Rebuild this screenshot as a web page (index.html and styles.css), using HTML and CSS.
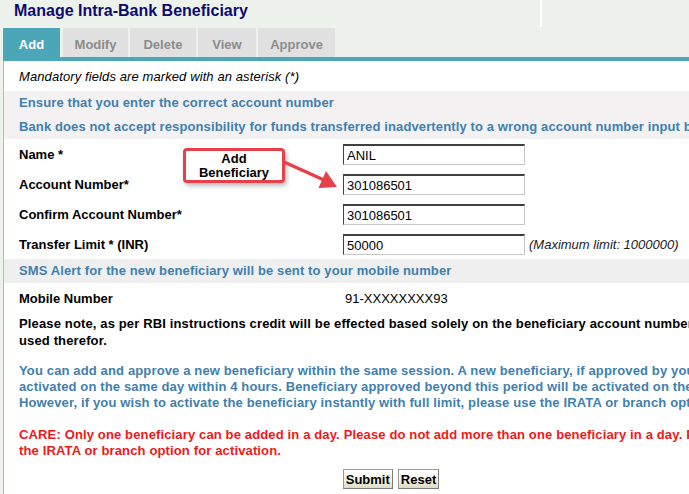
FILE: index.html
```html
<!DOCTYPE html>
<html>
<head>
<meta charset="utf-8">
<title>Manage Intra-Bank Beneficiary</title>
<link rel="stylesheet" href="styles.css">
</head>
<body>
<div class="page">
  <h1 class="title">Manage Intra-Bank Beneficiary</h1>
  <div class="tabs">
    <div class="tab tab-add active">Add</div>
    <div class="tab tab-modify">Modify</div>
    <div class="tab tab-delete">Delete</div>
    <div class="tab tab-view">View</div>
    <div class="tab tab-approve">Approve</div>
  </div>
  <div class="panel">
    <div class="note">Mandatory fields are marked with an asterisk (*)</div>
    <div class="band">
      <div class="band-row">Ensure that you enter the correct account number</div>
      <div class="band-row">Bank does not accept responsibility for funds transferred inadvertently to a wrong account number input by you.</div>
    </div>
    <div class="form-row">
      <div class="label">Name *</div>
      <div class="field"><input class="input" type="text" value="ANIL"></div>
    </div>
    <div class="form-row">
      <div class="label">Account Number*</div>
      <div class="field"><input class="input" type="text" value="301086501"></div>
    </div>
    <div class="form-row">
      <div class="label">Confirm Account Number*</div>
      <div class="field"><input class="input" type="text" value="301086501"></div>
    </div>
    <div class="form-row">
      <div class="label">Transfer Limit * (INR)</div>
      <div class="field"><input class="input" type="text" value="50000"><span class="hint">(Maximum limit: 1000000)</span></div>
    </div>
    <div class="sms-band">SMS Alert for the new beneficiary will be sent to your mobile number</div>
    <div class="form-row">
      <div class="label">Mobile Number</div>
      <div class="field value">91-XXXXXXXX93</div>
    </div>
    <p class="para para-note">Please note, as per RBI instructions credit will be effected based solely on the beneficiary account number information and the beneficiary name particulars will not be<br>used therefor.</p>
    <p class="para para-info">You can add and approve a new beneficiary within the same session. A new beneficiary, if approved by you, will be<br>activated on the same day within 4 hours. Beneficiary approved beyond this period will be activated on the next day.<br>However, if you wish to activate the beneficiary instantly with full limit, please use the IRATA or branch option.</p>
    <p class="para para-care"><b>CARE:</b> Only one beneficiary can be added in a day. Please do not add more than one beneficiary in a day. Please use<br>the IRATA or branch option for activation.</p>
    <div class="actions">
      <button class="btn" type="button">Submit</button>
      <button class="btn" type="button">Reset</button>
    </div>
  </div>

  <div class="callout">Add<br>Beneficiary</div>
  <svg class="arrow" width="400" height="220" viewBox="0 0 400 220">
    <line x1="284" y1="162" x2="324" y2="180" stroke="#e8404a" stroke-width="3.5" stroke-linecap="round"/>
    <polygon points="337,187 326,171 318.5,188" fill="#e8404a"/>
  </svg>
</div>
</body>
</html>
```
FILE: styles.css
```css
html, body {
  margin: 0;
  padding: 0;
}
body {
  background-color: #eef2ed;
  background-image:
    linear-gradient(to right, transparent 540px, #ffffff 540px, #ffffff 542px, transparent 542px);
  background-size: 100% 27px;
  background-repeat: no-repeat;
  overflow: hidden;
  font-family: "Liberation Sans", Arial, sans-serif;
  font-size: 13px;
  color: #000;
}
.page {
  position: relative;
  width: 780px;
}
.title {
  margin: 0;
  height: 28px;
  padding: 2px 0 0 14px;
  box-sizing: border-box;
  font-size: 16px;
  line-height: 18px;
  font-weight: bold;
  color: #0b0b6e;
}
.tabs {
  display: flex;
  gap: 2px;
  margin-left: 3px;
  height: 29px;
  border-bottom: 4px solid #4aa8b8;
}
.tab {
  height: 29px;
  line-height: 33px;
  text-align: center;
  font-weight: bold;
  font-size: 13px;
  background: #e1e1e1;
  color: #8c8c8c;
}
.tab.active {
  background: #4ba7b7;
  color: #ffffff;
}
.tab-add { width: 57px; }
.tab-modify { width: 65px; margin-left: 1px; }
.tab-delete { width: 66px; }
.tab-view { width: 58px; }
.tab-approve { width: 77px; }
.panel {
  margin-left: 3px;
  background: #ffffff;
  border-left: 1px solid #b8b8b8;
  height: 440px;
}
.note {
  height: 30px;
  line-height: 31px;
  padding-left: 15px;
  font-style: italic;
  white-space: nowrap;
  letter-spacing: 0.1px;
}
.band {
  background: #f4f1f2;
  padding-left: 15px;
}
.band-row {
  height: 24px;
  line-height: 24px;
  font-weight: bold;
  color: #3f80ad;
  white-space: nowrap;
  letter-spacing: 0.12px;
}
.form-row {
  display: flex;
  align-items: center;
  height: 30px;
  padding-left: 15px;
}
.label {
  width: 324px;
  font-weight: bold;
  white-space: nowrap;
  padding-top: 1px;
}
.field {
  display: flex;
  align-items: center;
  gap: 4px;
  white-space: nowrap;
}
.value {
  padding-left: 2px;
  padding-top: 1px;
}
.input {
  width: 182px;
  height: 21px;
  box-sizing: border-box;
  margin: 0;
  padding: 1px 3px 0;
  border: 1px solid #c9c9c9;
  border-top: 2px solid #404040;
  border-left: 1px solid #404040;
  font-family: "Liberation Sans", Arial, sans-serif;
  font-size: 13px;
  color: #000;
  background: #fff;
  outline: none;
}
.hint {
  font-style: italic;
  color: #222;
}
.sms-band {
  height: 24px;
  line-height: 24px;
  padding-left: 15px;
  background: #efefef;
  font-weight: bold;
  color: #3f80ad;
  white-space: nowrap;
  letter-spacing: 0.12px;
}
.para {
  margin: 0 0 16px;
  padding-left: 15px;
  line-height: 16px;
  font-weight: bold;
  white-space: nowrap;
  letter-spacing: 0.14px;
}
.para-note {
  color: #000;
  margin-top: 2px;
  line-height: 17px;
  margin-bottom: 14px;
}
.para-info {
  color: #3f80ad;
}
.para-care {
  color: #f01818;
  margin-bottom: 0;
}
.actions {
  display: flex;
  justify-content: center;
  gap: 5px;
  padding-top: 10px;
  padding-right: 2px;
}
.btn {
  height: 20px;
  margin: 0;
  padding: 0 2px;
  border: 1px solid #9a9a9a;
  border-right-color: #7d7d7d;
  border-bottom-color: #7d7d7d;
  background: linear-gradient(#ffffff, #f4f3e8 55%, #dcdbc4);
  font-family: "Liberation Sans", Arial, sans-serif;
  font-size: 13px;
  font-weight: bold;
  color: #000;
}
.callout {
  position: absolute;
  left: 183px;
  top: 148px;
  width: 102px;
  height: 35px;
  box-sizing: border-box;
  border: 3px solid #e8404a;
  border-radius: 4px;
  background: #ffffff;
  box-shadow: 2px 3px 4px rgba(0, 0, 0, 0.25);
  text-align: center;
  font-weight: bold;
  font-size: 13px;
  line-height: 14px;
  padding-top: 1px;
}
.arrow {
  position: absolute;
  left: 0;
  top: 0;
  pointer-events: none;
}
```
